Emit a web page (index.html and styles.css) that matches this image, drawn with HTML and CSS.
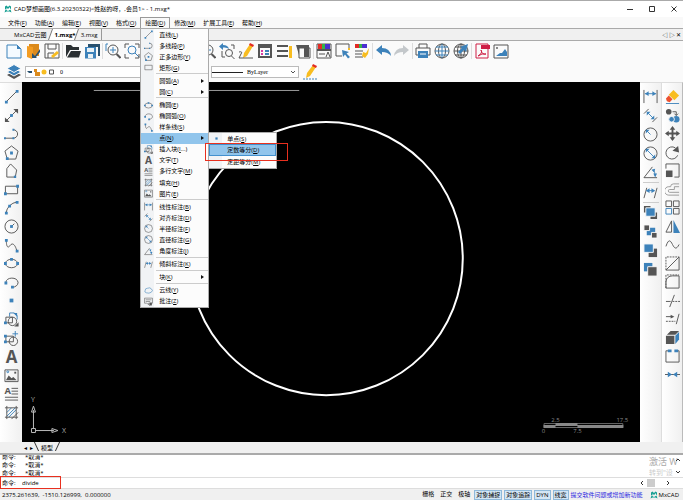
FILE: index.html
```html
<!DOCTYPE html>
<html lang="zh-CN">
<head>
<meta charset="utf-8">
<title>CAD梦想画图</title>
<link rel="stylesheet" href="styles.css">
</head>
<body>
<svg class="sprite" aria-hidden="true">
  <symbol id="line" viewBox="0 0 16 16"><path d="M2 14 14 2"/><path class="bf" d="M1 12.500h3v3H1zM12.500 1h3v3h-3z"/></symbol>
  <symbol id="xline" viewBox="0 0 16 16"><path d="M2 14 14 2"/><path class="df" d="M1 15V10l5 5zM15 1v5l-5-5z"/><path class="bf" d="M6.500 6.500h3v3h-3z"/></symbol>
  <symbol id="pline" viewBox="0 0 16 16"><path d="M1 13h9a4.500 4.500 0 0 0 0-9"/><path class="bf" d="M0 12h2v2H0zM9 12h2v2H9zM9 3h2v2H9z"/></symbol>
  <symbol id="penta" viewBox="0 0 16 16"><path d="M8 1 15 6.500 12.500 15h-9L1 6.500z"/><path class="bf" d="M6.500 7h3v3h-3zM2 13h3v3H2z"/></symbol>
  <symbol id="poly" viewBox="0 0 16 16"><path d="M3 15V6l4-5 6.500 6.500L12 15z"/><path class="bf" d="M10.500 13.500h2.500V16h-2.500z"/></symbol>
  <symbol id="rect" viewBox="0 0 16 16"><path d="M1.500 4.500h13v8h-13z"/><path class="bf" d="M0 11h3v3H0zM13 3h3v3h-3z"/></symbol>
  <symbol id="arc" viewBox="0 0 16 16"><path d="M2 14Q4 4 14 2"/><path class="bf" d="M1 12.500h3v3H1zM4.500 5h3v3h-3zM12.500 1h3v3h-3z"/></symbol>
  <symbol id="circle" viewBox="0 0 16 16"><circle cx="8" cy="8" r="7"/><path d="m8 8 3-3"/><path class="bf" d="M6.500 6.500h3v3h-3z"/></symbol>
  <symbol id="spline" viewBox="0 0 16 16"><path d="M2.500 3c0 7 2 8 4 5s5-2 7 5"/><path class="bf" d="M1 1h3v3H1zM12.500 12.500h3v3h-3z"/></symbol>
  <symbol id="ellipse" viewBox="0 0 16 16"><ellipse cx="8" cy="8" rx="6.500" ry="4.500"/><path class="bf" d="M0 6.500h3v3H0zM13 6.500h3v3h-3zM6.500 2h3v3h-3z"/></symbol>
  <symbol id="earc" viewBox="0 0 16 16"><path d="M2 8c0-6 12.500-6.500 13 0 0 3-3 5-6 5"/><path class="bf" d="M.5 7h3v3h-3zM7.500 11.500h3v3h-3z"/></symbol>
  <symbol id="point" viewBox="0 0 16 16"><path class="bf" d="M6 6h4v4H6z"/></symbol>
  <symbol id="insert" viewBox="0 0 16 16"><path class="b" d="M6 5V1h5l3 3v4"/><path d="M2 5.500h7v6H2z"/><circle cx="9" cy="10" r="4.500"/><path class="bf" d="M0 10h3v3H0zM10 1h4v4z"/><path class="df" d="M15.500 11v4.500H11z"/></symbol>
  <symbol id="block" viewBox="0 0 16 16"><path d="M2 5.500h8v6H2z"/><circle cx="10" cy="11" r="4.500"/><path class="b" d="M9 3h6M12 0v6"/><path class="bf" d="M0 4h3v3H0zM0 10h3v3H0z"/></symbol>
  <symbol id="letter" viewBox="0 0 16 16"><text class="glyph" x="8" y="15" text-anchor="middle">A</text></symbol>
  <symbol id="image" viewBox="0 0 16 16"><path d="M1 2h14v12.500H1z"/><path class="df" d="m2 13 3-5 3 3 2-1.500 3.500 3.500z"/><circle class="b" cx="4" cy="4" r="1"/><path class="df" d="M11 4h2v2h-2z"/></symbol>
  <symbol id="mtext" viewBox="0 0 16 16"><text class="glyph small" x="4" y="9" text-anchor="middle">A</text><path d="M8 2.500h7M8 5.500h7M8 8.500h7M1 12h14M1 15h14"/></symbol>
  <symbol id="hatch" viewBox="0 0 16 16"><path class="b" d="m3 8 5-5M3 12l9-9M5 13l8-8"/><path d="M1 3h14M1 13h14M3 1v14M13 1v14M8 15l7-7"/></symbol>
  <symbol id="dimlin" viewBox="0 0 16 16"><path d="M1 1v14M15 1v14"/><path class="b" d="M2 5h12"/><path class="bf" d="m2 5 4-2.500v5zM14 5l-4-2.500v5z"/></symbol>
  <symbol id="dimali" viewBox="0 0 16 16"><path d="m1 6 5-5M10 15l5-5"/><path class="b" d="m4 4 8 8"/><path class="bf" d="M4 4h4L4 8zM12 12V8l-4 4z"/></symbol>
  <symbol id="dimrad" viewBox="0 0 16 16"><circle cx="8" cy="8" r="7"/><path class="b" d="m8 8-4-4"/><path class="bf" d="M3 3h4L3 7z"/></symbol>
  <symbol id="dimdia" viewBox="0 0 16 16"><circle cx="8" cy="8" r="7"/><path class="b" d="m4 4 8 8"/><path class="bf" d="M3 3h4L3 7zM13 13V9l-4 4z"/></symbol>
  <symbol id="dimang" viewBox="0 0 16 16"><path d="M10 2 1 13.500h14"/><path class="b" d="M11 5q2 3 2 7"/><path class="bf" d="m9 5 4-1-1 4zM11 9h4l-2 4z"/></symbol>
  <symbol id="dimobl" viewBox="0 0 16 16"><path d="m4 3-3 11M15 3l-3 11"/><path class="b" d="M4 6h8"/><path class="bf" d="m3 6 4-2.500v5zM13 6 9 3.500v5z"/></symbol>
  <symbol id="ord1" viewBox="0 0 16 16"><path class="df" d="M1 1h7v7H1zM8 8h7v7H8z"/><path class="bf halo" d="M3 3h10v9H3z"/></symbol>
  <symbol id="ord2" viewBox="0 0 16 16"><path class="bf" d="M4 4h9v8H4z"/><path class="df halo" d="M1 1h6v6H1zM9 9h6v6H9z"/></symbol>
  <symbol id="ord3" viewBox="0 0 16 16"><path class="df" d="M6 6h9v9H6z"/><path class="bf halo" d="M1 1h10v9H1z"/></symbol>
  <symbol id="ord4" viewBox="0 0 16 16"><path class="bf" d="M1 1h9v9H1z"/><path class="df halo" d="M5 5h10v10H5z"/></symbol>
  <symbol id="eraser" viewBox="0 0 16 16"><path class="yf" d="m9 1 6 6-5 5-6-6z"/><path class="of" d="m4 7 4 4-3 3-3-1-1-3z"/><path class="b" d="M1 15.500h14"/></symbol>
  <symbol id="copy" viewBox="0 0 16 16"><circle class="df" cx="4" cy="4" r="3"/><circle class="bf" cx="12" cy="12" r="3.500"/><circle class="bf halo" cx="7" cy="12" r="3"/><path d="M8 4h4v4m-2-2 2 2 2-2"/></symbol>
  <symbol id="move" viewBox="0 0 16 16"><path d="M8 2v12M2 8h12" class="thick"/><path class="df" d="m8 0 3 4H5zM8 16l3-4H5zM0 8l4-3v6zM16 8l-4-3v6z"/></symbol>
  <symbol id="rotate" viewBox="0 0 16 16"><path d="M13.500 11A6.500 6.500 0 1 1 11 3"/><path class="df" d="m14 1 1 7-7-2z"/></symbol>
  <symbol id="scale" viewBox="0 0 16 16"><path d="M1 6V1h14v14h-5"/><path class="df" d="M1 8h7v7H1z"/></symbol>
  <symbol id="offset" viewBox="0 0 16 16"><path class="gray" d="M15 2H9a3 3 0 0 0-3 3H4a4 4 0 0 0 0 9h11M15 5h-5v3H5a1 1 0 0 0 0 3h10"/></symbol>
  <symbol id="array" viewBox="0 0 16 16"><path d="M1 1h6v6H1zM9 1h6v6H9zM9 9h6v6H9z"/><path class="b" d="M1 9h6v6H1z"/></symbol>
  <symbol id="mirror" viewBox="0 0 16 16"><path d="M7 2v12H1z"/><path class="bf" d="M9 1v14h7z"/></symbol>
  <symbol id="wave" viewBox="0 0 16 16"><path d="M1 10C4 1 6 4 8 8s4 6 7 0"/></symbol>
  <symbol id="chamfer" viewBox="0 0 16 16"><path class="dash" d="M1 15V1h14"/><path d="M1 15 15 1v14z"/></symbol>
  <symbol id="fillet" viewBox="0 0 16 16"><path class="dash" d="M1 15V1h14"/><path d="M1 15V8q1-6 7-6h7v13z"/></symbol>
  <symbol id="trim" viewBox="0 0 16 16"><path d="M1 9h5M10 2 5 15"/><path class="dash" d="M8 9h8"/></symbol>
  <symbol id="extend" viewBox="0 0 16 16"><path d="M1 6h7M15 3l-3 11"/><path class="df" d="m6 4 4 2-4 2z"/><path class="dash" d="M1 11h10"/></symbol>
  <symbol id="cube" viewBox="0 0 16 16"><path class="df" d="M1 6h9v9H1zM2 5l4-4h9l-4 4z"/><path class="bf" d="m11 6 4-4v8l-4 5z"/></symbol>
  <symbol id="break" viewBox="0 0 16 16"><path d="M4 3H1v12h14V3h-3"/><path class="bf" d="M3 1.500h4v3H3zM10 1.500h4v3h-4z"/></symbol>
  <symbol id="join" viewBox="0 0 16 16"><path d="M0 8h16"/><path class="bf" d="m3 5 4.500 3L3 11zM13 5 8.500 8 13 11z"/></symbol>
  <symbol id="new" viewBox="0 0 16 16"><path class="b light" d="M1 2h10l4 4v9H1z"/><path class="bf" d="M11 2v4h4z"/></symbol>
  <symbol id="open" viewBox="0 0 16 16"><path class="orf" d="M4 1h10v12H4z"/><path class="orange" d="M2 3v11l5 2 1-3V4z"/><path class="navy" d="M15 6 10 13l-3-3 0 5h5l-1-1 4-5z"/></symbol>
  <symbol id="save" viewBox="0 0 16 16"><path d="M1 1h14v14H1zM4 1v5h8V1M4 15v-5h6"/><path class="yf" d="m7 13 6-5 2 2-6 5z"/></symbol>
  <symbol id="folder" viewBox="0 0 16 16"><path class="blackf" d="M1 14V2h5l2 2h6v3H5z"/><path class="blackf" d="M6 8h10l-2 6.500H2z"/></symbol>
  <symbol id="saveas" viewBox="0 0 16 16"><path class="navy" d="M4 1h12v12h-2V4H4z"/><path class="bf" d="M1 4h11v11.500H1z"/><path class="white" d="M3 5h7v4H3zM4 11h5v4H4z"/></symbol>
  <symbol id="zoomin" viewBox="0 0 16 16"><circle cx="8" cy="7" r="5"/><path class="thick" d="m11.500 11 4 4"/><path class="b" d="M3 1H1v7M8 4v6M5 7h6"/></symbol>
  <symbol id="zoomwin" viewBox="0 0 16 16"><circle class="b" cx="8" cy="7" r="4"/><path class="b" d="m11 10 4 4"/><path d="M1 5V1h4M11 1h4v4M1 11v4h4M11 15h4v-4"/></symbol>
  <symbol id="zoomback" viewBox="0 0 16 16"><path d="M3 8v6h3M12 2h3v4"/><circle cx="10" cy="10" r="3.500"/><path d="m12.500 13 3 3"/><path class="bf" d="M0 3.500 4 0v2q5 0 6 4-2-2-6-1.500V7z"/></symbol>
  <symbol id="pencil" viewBox="0 0 16 16"><path class="yf" d="M12 1 15 3 9 13l-4 2 1-5z"/><path class="rf" d="m12 0 4 2-1 2-4-2z"/><path d="M1 9q4-1 2 2l-2 4h14"/></symbol>
  <symbol id="props" viewBox="0 0 16 16"><path class="thick" d="M2 2h12v12H2z"/><path class="df" d="M1 1h14v4H1z"/><path class="pf" d="M4 7h2v2H4zM4 10h2v2H4z"/><path class="bf" d="M8 7h4v2H8zM8 10h4v2H8z"/></symbol>
  <symbol id="layers2" viewBox="0 0 16 16"><path class="thick" d="M1 3h11M1 8h11M1 13h11"/><path class="yf" d="M13 3h3v12h-3z"/></symbol>
  <symbol id="panel" viewBox="0 0 16 16"><path d="M4 5h11v10H4z"/><path class="df" d="M1 2h13v3H4v7zM9 5h5v9H9z"/></symbol>
  <symbol id="palette" viewBox="0 0 16 16"><path d="M1 1h14v14H1z"/><path class="df" d="M1 6h14v2H1z"/><path class="rf" d="M2 1h4v5H2z"/><path class="gf" d="M6 1h3v5H6z"/><path class="purplef" d="M9 1h5v5H9z"/><path d="M3 11h6m1 3 2-5 2 5"/></symbol>
  <symbol id="select" viewBox="0 0 16 16"><path d="M7 13H1V1h13v6"/><path class="bf" d="m7 7 7 2-2.500 1.500L15 14l-2 1.500-3-4L8 14z"/><path class="yf" d="M13 5h2v2h-2z"/></symbol>
  <symbol id="brush" viewBox="0 0 16 16"><path class="rf" d="M1 1h4v4H1z"/><path class="gf" d="M5 1h3v4H5z"/><path class="purplef" d="M8 1h5v4H8z"/><path d="M1 8h8M1 11h7M1 14h8"/><path class="yf" d="m9 9 3 1 3-5-1 6-3 4-3-2z"/></symbol>
  <symbol id="undo" viewBox="0 0 16 16"><path class="bf" d="m1 7 6-5v3q8 0 9 8-3-4-9-4v3z"/></symbol>
  <symbol id="redo" viewBox="0 0 16 16"><path class="lf" d="M15 7 9 2v3q-8 0-9 8 3-4 9-4v3z"/></symbol>
  <symbol id="print" viewBox="0 0 16 16"><path d="M4 5V1h8v4M1 5h14v7H1z"/><path class="bf" d="M3 8h10v7H3z"/><path class="whiteline" d="M5 11h6"/></symbol>
  <symbol id="globe" viewBox="0 0 16 16"><circle cx="8" cy="8" r="7"/><ellipse cx="8" cy="8" rx="3.500" ry="7"/><path class="b" d="M1 8h14M2 4h12M2 12h12M8 1v14"/></symbol>
  <symbol id="globe2" viewBox="0 0 16 16"><circle cx="8" cy="8" r="7"/><ellipse cx="8" cy="8" rx="3.500" ry="7"/><path d="M1 8h14M2 4h12M2 12h12M8 1v14"/><path class="bf" d="m15 1-2 8-2-2-4 4-2-2 4-4-2-1z"/></symbol>
  <symbol id="pdf" viewBox="0 0 16 16"><path class="red" d="M2 1h12v14H2z"/><path class="crimson" d="M7 2h9v4H7z"/><path class="red" d="M4 13q5-3 3-6 1 5 5 4-4-1-8 2"/></symbol>
  <symbol id="picture" viewBox="0 0 16 16"><path d="M1 2h14v13H1z"/><path class="bf" d="m3 13 4-3 2 0 3-4 2 3v4z"/><circle cx="4" cy="5" r=".6"/></symbol>
  <symbol id="stack" viewBox="0 0 16 16"><path class="df" d="m1 11 7 4 7-4-7-4z"/><path class="bf halo" d="m1 8 7 4 7-4-7-4z"/><path class="bf halo" d="m1 4.500 7 4 7-4-7-4z"/></symbol>
  <symbol id="logo" viewBox="0 0 16 16"><path class="teal" d="M2 8V3l3-2 3 3 3-3 3 2v5l-2-1V4L8 8 5 5v4zM1 15l2-6 5 3 5-3 2 6-4-2H5z"/></symbol>
  <symbol id="rectm" viewBox="0 0 16 16"><path d="M1.500 4h13v8h-13z"/></symbol>
  <symbol id="cloud" viewBox="0 0 16 16"><path class="b" d="M4 12q-4-1-2-4 0-4 4-4 5-2 7 1 4 3 0 6-4 3-9 1"/></symbol>
  <symbol id="note" viewBox="0 0 16 16"><path d="M1 2h14v9H8l2 4-5-4H1zM3 5h10M3 8h8"/><path class="df" d="M10 10h4v5h-4z"/></symbol>
</svg>

<header class="titlebar">
  <svg class="logo"><use href="#logo"/></svg>
  <h1>CAD梦想画图(6.3.20230322)&lt;姓赵的呀，,会员1&gt; - 1.mxg*</h1>
  <div class="window-buttons">
    <button aria-label="最小化"><svg viewBox="0 0 6 6"><path d="M0 3.500h6"/></svg></button>
    <button aria-label="最大化"><svg viewBox="0 0 6 6"><path d="M.5.5h5v5h-5z"/></svg></button>
    <button aria-label="关闭"><svg viewBox="0 0 6 6"><path d="m.5.5 5 5m0-5-5 5"/></svg></button>
  </div>
</header>

<nav class="menubar">
  <button>文件(<u>F</u>)</button><button>功能(<u>A</u>)</button><button>编辑(<u>E</u>)</button><button>视图(<u>V</u>)</button><button>格式(<u>O</u>)</button>
  <div class="menu-anchor">
    <button class="open">绘图(<u>D</u>)</button>
    <div class="menu">
      <button><svg><use href="#line"/></svg>直线(<u>L</u>)</button>
      <button><svg><use href="#pline"/></svg>多线段(<u>P</u>)</button>
      <button><svg><use href="#penta"/></svg>正多边形(<u>Y</u>)</button>
      <button><svg><use href="#rectm"/></svg>矩形(<u>G</u>)</button>
      <hr>
      <button class="more"><svg></svg>圆弧(<u>A</u>)</button>
      <button class="more"><svg></svg>圆(<u>C</u>)</button>
      <hr>
      <button><svg><use href="#ellipse"/></svg>椭圆(<u>E</u>)</button>
      <button><svg><use href="#earc"/></svg>椭圆弧(<u>O</u>)</button>
      <button><svg><use href="#spline"/></svg>样条线(<u>S</u>)</button>
      <div class="sub-anchor">
        <button class="more active"><svg></svg>点(<u>N</u>)</button>
        <div class="menu submenu">
          <button><svg><use href="#point"/></svg>单点(<u>S</u>)</button>
          <button class="active"><svg></svg>定数等分(<u>D</u>)</button>
          <button><svg></svg>定距等分(<u>M</u>)</button>
          <span class="mark menu-mark"></span>
        </div>
      </div>
      <button><svg><use href="#insert"/></svg>插入块(<u>I</u>...)</button>
      <button><svg class="ink"><use href="#letter"/></svg>文字(<u>T</u>)</button>
      <button><svg><use href="#mtext"/></svg>多行文字(<u>M</u>)</button>
      <button><svg><use href="#hatch"/></svg>填充(<u>H</u>)</button>
      <button><svg><use href="#image"/></svg>图片(<u>E</u>)</button>
      <hr>
      <button><svg><use href="#dimlin"/></svg>线性标注(<u>B</u>)</button>
      <button><svg><use href="#dimali"/></svg>对齐标注(<u>D</u>)</button>
      <button><svg><use href="#dimrad"/></svg>半径标注(<u>F</u>)</button>
      <button><svg><use href="#dimdia"/></svg>直径标注(<u>G</u>)</button>
      <button><svg><use href="#dimang"/></svg>角度标注(<u>J</u>)</button>
      <hr>
      <button><svg><use href="#dimobl"/></svg>倾斜标注(<u>K</u>)</button>
      <hr>
      <button class="more"><svg></svg>块(<u>K</u>)</button>
      <hr>
      <button><svg><use href="#cloud"/></svg>云线(<u>Y</u>)</button>
      <button><svg><use href="#note"/></svg>批注(<u>Z</u>)</button>
    </div>
  </div>
  <button>修改(<u>M</u>)</button><button>扩展工具(<u>E</u>)</button><button>帮助(<u>H</u>)</button>
</nav>

<div class="doctabs">
  <button>MxCAD云图</button><button class="current">1.mxg*</button><button class="boxed">3.mxg</button>
  <div class="tab-tools"><button aria-label="上一个">◁</button><button aria-label="下一个">▷</button><button aria-label="关闭标签">✕</button></div>
</div>

<div class="toolbar">
  <div class="group"><button aria-label="新建"><svg><use href="#new"/></svg></button><button aria-label="打开云图"><svg><use href="#open"/></svg></button><button aria-label="保存云图"><svg><use href="#save"/></svg></button></div>
  <div class="group"><button aria-label="打开"><svg><use href="#folder"/></svg></button><button aria-label="保存"><svg><use href="#saveas"/></svg></button></div>
  <div class="group"><button aria-label="缩放"><svg><use href="#zoomin"/></svg></button><button aria-label="窗口缩放"><svg><use href="#zoomwin"/></svg></button><button aria-label="范围"><svg><use href="#zoomwin"/></svg></button><button aria-label="平移"><svg><use href="#move"/></svg></button><button aria-label="放大"><svg><use href="#zoomin"/></svg></button><button aria-label="缩小"><svg><use href="#zoomin"/></svg></button><button aria-label="上一视图"><svg><use href="#zoomback"/></svg></button><button aria-label="草图"><svg><use href="#pencil"/></svg></button><button aria-label="特性"><svg><use href="#props"/></svg></button><button aria-label="线型"><svg><use href="#layers2"/></svg></button><button aria-label="面板"><svg><use href="#panel"/></svg></button></div>
  <div class="group"><button aria-label="文字样式"><svg><use href="#palette"/></svg></button><button aria-label="选择"><svg><use href="#select"/></svg></button><button aria-label="格式刷"><svg><use href="#brush"/></svg></button></div>
  <div class="group"><button aria-label="撤销"><svg><use href="#undo"/></svg></button><button aria-label="重做"><svg><use href="#redo"/></svg></button></div>
  <div class="group"><button aria-label="打印"><svg><use href="#print"/></svg></button><button aria-label="网页"><svg><use href="#globe"/></svg></button><button aria-label="分享"><svg><use href="#globe2"/></svg></button></div>
  <div class="group"><button aria-label="导出PDF"><svg><use href="#pdf"/></svg></button><button aria-label="导出图片"><svg><use href="#picture"/></svg></button></div>
</div>

<div class="toolbar formats">
  <button aria-label="图层"><svg><use href="#stack"/></svg></button>
  <div class="combo layer">
    <svg viewBox="0 0 30 8"><path class="navy" d="M1 3h5v2H3z"/><path class="orf" d="M8 1h3v3h3v4H9V4H8z"/><circle class="yf" cx="18" cy="4" r="2.500"/><path d="M23.500 2h4v4h-4z"/></svg>
    <select aria-label="当前图层"><option>0</option></select>
  </div>
  <div class="combo linetype">
    <svg viewBox="0 0 31 8"><path class="ink" d="M0 4.500h31"/></svg>
    <select aria-label="线型"><option>ByLayer</option></select>
    <svg class="chevron" viewBox="0 0 6 6"><path d="m1 2 2 2 2-2"/></svg>
  </div>
  <button aria-label="线型编辑"><svg viewBox="0 0 16 16"><path class="yf" d="M11 1 14 3 8 12l-4 2 1-5z"/><path class="rf" d="m11 0 4 2-1 2-4-2z"/><path class="b dash" d="M1 15h14"/></svg></button>
</div>

<main class="workspace">
  <aside class="tools left">
    <button aria-label="直线"><svg><use href="#line"/></svg></button><button aria-label="构造线"><svg><use href="#xline"/></svg></button><button aria-label="多线段"><svg><use href="#pline"/></svg></button><button aria-label="正多边形"><svg><use href="#penta"/></svg></button><button aria-label="多边形"><svg><use href="#poly"/></svg></button><button aria-label="矩形"><svg><use href="#rect"/></svg></button><button aria-label="圆弧"><svg><use href="#arc"/></svg></button><button aria-label="圆"><svg><use href="#circle"/></svg></button><button aria-label="样条线"><svg><use href="#spline"/></svg></button><button aria-label="椭圆"><svg><use href="#ellipse"/></svg></button><button aria-label="椭圆弧"><svg><use href="#earc"/></svg></button><button aria-label="点"><svg><use href="#point"/></svg></button><button aria-label="插入块"><svg><use href="#insert"/></svg></button><button aria-label="创建块"><svg><use href="#block"/></svg></button><button aria-label="文字"><svg><use href="#letter"/></svg></button><button aria-label="图片"><svg><use href="#image"/></svg></button><button aria-label="多行文字"><svg><use href="#mtext"/></svg></button><button aria-label="填充"><svg><use href="#hatch"/></svg></button>
  </aside>
  <section class="drawing">
    <svg class="canvas" viewBox="0 0 618 361" preserveAspectRatio="xMinYMin meet">
      <path class="guide" d="M72 8.500h206"/>
      <circle class="shape" cx="305" cy="177" r="137"/>
      <g class="ucs"><path d="M9.500 347.500h4v4h-4zM11.500 347v-18M14 349.500h18M9.500 331l2-6 2 6zM30 347.500l6 2-6 2z"/><text x="9" y="321">Y</text><text x="40" y="352">X</text></g>
      <g class="ruler"><path class="frame" d="M523.500 342.500h79v4h-79z"/><path class="bar" d="M523 344h12v3h-12zM535 342h22v3h-22zM557 344h46v3h-46z"/><text x="535" y="341">2.5</text><text x="602" y="341">17.5</text><text x="523" y="352">0</text><text x="557" y="352">7.5</text></g>
    </svg>
  </section>
  <aside class="tools right">
    <button aria-label="线性标注"><svg><use href="#dimlin"/></svg></button><button aria-label="对齐标注"><svg><use href="#dimali"/></svg></button><button aria-label="半径标注"><svg><use href="#dimrad"/></svg></button><button aria-label="直径标注"><svg><use href="#dimdia"/></svg></button><button aria-label="角度标注"><svg><use href="#dimang"/></svg></button><hr><button aria-label="倾斜标注"><svg><use href="#dimobl"/></svg></button><hr><button aria-label="置顶"><svg><use href="#ord1"/></svg></button><button aria-label="置底"><svg><use href="#ord2"/></svg></button><button aria-label="前移"><svg><use href="#ord3"/></svg></button><button aria-label="后移"><svg><use href="#ord4"/></svg></button>
  </aside>
  <aside class="tools right edit">
    <button aria-label="删除"><svg><use href="#eraser"/></svg></button><button aria-label="复制"><svg><use href="#copy"/></svg></button><button aria-label="移动"><svg><use href="#move"/></svg></button><button aria-label="旋转"><svg><use href="#rotate"/></svg></button><button aria-label="缩放"><svg><use href="#scale"/></svg></button><button aria-label="偏移"><svg><use href="#offset"/></svg></button><button aria-label="阵列"><svg><use href="#array"/></svg></button><button aria-label="镜像"><svg><use href="#mirror"/></svg></button><button aria-label="曲线"><svg><use href="#wave"/></svg></button><button aria-label="倒角"><svg><use href="#chamfer"/></svg></button><button aria-label="圆角"><svg><use href="#fillet"/></svg></button><button aria-label="修剪"><svg><use href="#trim"/></svg></button><button aria-label="延伸"><svg><use href="#extend"/></svg></button><button aria-label="分解"><svg><use href="#cube"/></svg></button><button aria-label="打断"><svg><use href="#break"/></svg></button><button aria-label="合并"><svg><use href="#join"/></svg></button>
  </aside>
</main>

<div class="layouts"><button aria-label="左">◂</button><button aria-label="右">▸</button><button class="sheet">模型</button></div>

<section class="console">
  <div class="history">
    <div class="log"><p><span>命令:</span>*取消*</p><p><span>命令:</span>*取消*</p><p><span>命令:</span>*取消*</p></div>
    <div class="watermark"><b>激活 W</b><span>转到"设</span></div>
    <div class="vscroll"><button aria-label="上滚"><svg viewBox="0 0 6 6"><path d="m1 4 2-2 2 2"/></svg></button><button aria-label="下滚"><svg viewBox="0 0 6 6"><path d="m1 2 2 2 2-2"/></svg></button></div>
  </div>
  <div class="prompt">
    <label for="cmd">命令:</label><input id="cmd" value="divide">
    <div class="hscroll"><button aria-label="左滚"><svg viewBox="0 0 6 6"><path d="M4 1 2 3l2 2"/></svg></button><i></i><button aria-label="右滚"><svg viewBox="0 0 6 6"><path d="m2 1 2 2-2 2"/></svg></button></div>
    <span class="mark prompt-mark"></span>
  </div>
</section>

<footer class="status">
  <output>2375.261639,&nbsp; -1510.126999,&nbsp; 0.000000</output>
  <button>栅格</button><button>正交</button><button>极轴</button><button class="on">对象捕捉</button><button class="on">对象追踪</button><button class="on">DYN</button><button class="on">线宽</button>
  <a href="#feedback">提交软件问题或增加新功能</a>
  <span class="brand"><svg><use href="#logo"/></svg>MxCAD</span>
</footer>
</body>
</html>
```
FILE: styles.css
```css
* { box-sizing: border-box; }
body {
  margin: 0;
  height: 100vh;
  display: flex;
  flex-direction: column;
  overflow: hidden;
  background: #f0f0f0;
  color: #000;
  font: 6px/10px "Open Sans", "Noto Sans CJK SC", sans-serif;
}
button, input, select { font: inherit; color: inherit; border: 0; padding: 0; margin: 0; background: none; white-space: nowrap; }
button { display: block; flex: none; }
u { text-decoration-thickness: 1px; text-underline-offset: 1px; }
hr { border: 0; margin: 0; }

/* icons */
svg { display: block; fill: none; stroke: #555; stroke-width: 1; }
.sprite { display: none; }
.b { stroke: #3d82ba; }
.bf { fill: #3d82ba; stroke: none; }
.df { fill: #555; stroke: none; }
.lf { fill: #c4c8cb; stroke: none; }
.yf { fill: #f8bd20; stroke: none; }
.of { fill: #ed5130; stroke: none; }
.rf { fill: #e22b25; stroke: none; }
.gf { fill: #35b44a; stroke: none; }
.pf { fill: #d73aa6; stroke: none; }
.purplef { fill: #4b2fd0; stroke: none; }
.orf { fill: #db8a1c; stroke: none; }
.orange { fill: #f39c22; stroke: none; }
.navy { fill: #28516f; stroke: none; }
.blackf { fill: #2b3033; stroke: none; }
.white { fill: #e8f1f6; stroke: none; }
.whiteline { stroke: #fff; }
.teal { fill: #139e91; stroke: none; }
.crimson { fill: #ce1e45; stroke: none; }
.red { stroke: #ce1e45; }
.gray { stroke: #999; }
.ink { stroke: #222; }
.light { fill: #f4faff; }
.thick { stroke-width: 2; }
.halo { stroke: #fafafa; stroke-width: 1; }
.dash { stroke-dasharray: 2 1; }
.glyph { font: bold 18px "Open Sans", sans-serif; fill: #555; stroke: none; }
.glyph.small { font-size: 10px; }

/* title bar */
.titlebar { flex: none; height: 17px; display: flex; align-items: center; gap: 2px; padding: 0 4px; background: #fff; border-top: 1px solid #aaa; }
.logo { width: 8px; height: 8px; }
.titlebar h1 { margin: 0; flex: 1; font-size: 6px; font-weight: 400; white-space: nowrap; }
.window-buttons { display: flex; gap: 16px; padding-right: 2px; }
.window-buttons svg { width: 6px; height: 6px; stroke: #333; }

/* menus */
.menubar { flex: none; height: 11px; display: flex; padding-left: 4px; background: #f9f9f9; }
.menubar > button, .menubar .open { height: 11px; padding: 0 4px; }
.menubar .open { border: 1px solid #999; border-bottom: 0; line-height: 9px; background: #f9f9f9; }
.menu-anchor { position: relative; }
.menu {
  position: absolute;
  z-index: 5;
  top: 11px;
  left: 0;
  width: 69px;
  height: 280px;
  display: flex;
  flex-direction: column;
  border: 1px solid #aaa;
  background: linear-gradient(90deg, #f1f3f5 13px, #fcfcfc 13px);
}
.menu button { flex: 1 1 0; width: 100%; display: flex; align-items: center; text-align: left; padding-left: 3px; white-space: nowrap; }
.menu button svg { width: 9px; height: 9px; flex: none; margin-right: 6px; }
.menu > hr { height: 2px; margin-left: 15px; border-top: 1px solid #ccc; }
.menu .active { background: #91c5ec; }
.menu .more::after { content: ""; margin-left: auto; margin-right: 4px; border: 2px solid transparent; border-left: 3px solid #111; border-right: 0; }
.ink .glyph { fill: #111; }
.sub-anchor { position: relative; flex: 1 1 0; display: flex; }
.submenu { top: -1px; left: 67px; height: 37px; }
.submenu .active { outline: 1px solid #4391ce; outline-offset: -1px; }
.mark { position: absolute; border: 1px solid #e8301f; pointer-events: none; }
.menu-mark { top: 10px; left: -4px; width: 83px; height: 18px; }

/* document tabs */
.doctabs { flex: none; height: 13px; display: flex; align-items: center; padding-left: 14px; border: solid #aaa; border-width: 1px 0; }
.doctabs > button { padding: 0 3px; height: 11px; }
.doctabs > button:first-child { padding: 0 4px 0 0; }
.doctabs .current { position: relative; z-index: 0; padding: 0 2px 0 4px; font-weight: 700; }
.doctabs .current::before { content: ""; position: absolute; z-index: -1; inset: 0; background: #fff; border: solid #777; border-width: 0 1px; transform: skewX(-20deg); }
.doctabs .boxed { border-right: 1px solid #999; }
.tab-tools { margin-left: auto; display: flex; gap: 1px; padding-right: 2px; }

/* toolbars */
.toolbar { flex: none; height: 20px; display: flex; align-items: center; padding-left: 6px; background: #fafafa; }
.toolbar button svg { width: 16px; height: 16px; }
.group { display: flex; gap: 3px; }
.group + .group { margin-left: 2px; padding-left: 2px; border-left: 1px solid #ddd; }
.formats { height: 21px; gap: 3px; }
.combo { height: 12px; display: flex; align-items: center; gap: 4px; border: 1px solid #bbb; background: #fff; }
.combo svg { height: 8px; flex: none; }
.combo select { flex: 1; min-width: 0; height: 10px; appearance: none; font-family: "Liberation Serif", serif; }
.layer { width: 183px; }
.layer svg { width: 30px; }
.linetype { width: 88px; }
.linetype svg { width: 31px; }
.linetype .chevron { width: 6px; height: 6px; margin-right: 2px; }

/* workspace */
.workspace { flex: 1; min-height: 0; display: flex; }
.tools { flex: none; display: flex; flex-direction: column; align-items: center; background: linear-gradient(90deg, #fff, #f0f0f0); border-top: 1px solid #ddd; }
.tools svg { width: 15px; height: 15px; }
.left { width: 22px; justify-content: space-between; padding: 6px 0 22px; }
.right { width: 21px; gap: 4px; padding-top: 6px; }
.right hr { width: 16px; height: 1px; background: #ccc; margin: -2px 0; }
.edit { width: 22px; justify-content: space-between; gap: 0; padding-bottom: 60px; border-left: 1px solid #ddd; border-right: 1px solid #bbb; }
.drawing { flex: 1; min-width: 0; background: #000; }
.canvas { width: 100%; height: 100%; }
.guide { stroke: #999; }
.shape { stroke: #fff; stroke-width: 2; }
.ucs { stroke: #bbb; }
.ucs text { fill: #aaa; stroke: none; font-size: 7px; }
.ruler text { fill: #888; stroke: none; font-size: 6px; text-anchor: middle; }
.frame { stroke: #666; }
.bar { fill: #888; stroke: none; }

.layouts { flex: none; height: 11px; display: flex; gap: 3px; padding-left: 24px; }
.sheet { padding: 0 5px; position: relative; }
.sheet::before, .sheet::after { content: ""; position: absolute; top: 0; height: 9px; border-left: 1px solid #333; transform: skewX(25deg); left: 0; }
.sheet::after { left: auto; right: 0; transform: skewX(-25deg); }

/* command line */
.console { flex: none; border-top: 2px solid #aaa; background: #fff; }
.history { height: 22px; display: flex; overflow: hidden; }
.log { flex: 1; display: flex; flex-direction: column; justify-content: flex-end; }
.log p { margin: 0; padding-left: 2px; display: flex; line-height: 8px; height: 8px; flex: none; }
.log span { width: 23px; }
.watermark { color: #a8a8a8; display: flex; flex-direction: column; white-space: nowrap; width: 24px; }
.watermark b { font-size: 9px; font-weight: 400; line-height: 13px; }
.watermark span { font-size: 7px; line-height: 9px; color: #ccc; }
.vscroll { width: 10px; display: flex; flex-direction: column; justify-content: space-between; align-items: center; padding: 2px 0; }
.vscroll svg, .hscroll svg { width: 6px; height: 6px; stroke: #333; }
.prompt { position: relative; display: flex; align-items: center; height: 11px; padding-left: 2px; border-top: 1px solid #ddd; }
.prompt label { width: 20px; }
.prompt input { flex: 1; min-width: 0; height: 10px; outline: 0; }
.hscroll { display: flex; align-items: center; gap: 2px; width: 44px; }
.hscroll i { width: 8px; height: 8px; background: #ccc; margin-right: 8px; }
.prompt-mark { left: 0; top: -2px; width: 61px; height: 13px; }

/* status bar */
.status { flex: none; height: 12px; display: flex; align-items: center; padding: 0 4px 0 2px; border-top: 1px solid #ddd; gap: 2px; }
.status output { flex: 1; white-space: nowrap; }
.status button { padding: 0 2px; line-height: 9px; }
.status .on { padding: 0 1px; border: 1px solid #8fb9da; background: #d3e6f5; line-height: 8px; }
.status a { color: #2a1fe0; text-decoration: none; white-space: nowrap; }
.brand { display: flex; align-items: center; gap: 1px; margin-left: 5px; }
.brand svg { width: 8px; height: 8px; }
```
